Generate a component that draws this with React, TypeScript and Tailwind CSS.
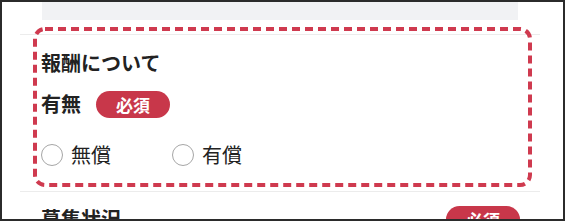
import React from 'react'

function RequiredBadge() {
  return (
    <span className="inline-flex items-center justify-center w-[74px] h-[27px] rounded-full bg-[#c8374a] text-white text-[17px] font-bold leading-none">
      必須
    </span>
  )
}

function Radio({ label, wide }: { label: string; wide?: boolean }) {
  return (
    <label className={`flex items-center gap-[8px] ${wide ? 'w-[131px]' : ''}`}>
      <span className="w-[22px] h-[22px] rounded-full border-[1.5px] border-[#a6a6a6] bg-white shrink-0" />
      <span className="text-[20px] leading-[30px]">{label}</span>
    </label>
  )
}

export default function App() {
  return (
    <div className="w-[565px] h-[221px] overflow-hidden border-2 border-[#2b2b2b] bg-white text-[#222] font-['Noto_Sans_CJK_JP','Noto_Sans',sans-serif]">
      <div className="ml-[18px] mr-[23px]">
        <div className="mx-[22px] h-[18px] bg-[#f1f2f4]" />
        <div className="mt-[14px] border-t border-[#ececec]" />

        {/* 報酬について */}
        <section className="relative pl-[21px] pr-[20px] pt-[13px] pb-[21px]">
          <h2 className="text-[20px] leading-[30px] font-bold">報酬について</h2>
          <div className="mt-[11px] flex items-center gap-[15px]">
            <span className="text-[20px] leading-[30px] font-bold">有無</span>
            <RequiredBadge />
          </div>
          <div className="mt-[21px] flex items-center">
            <Radio label="無償" wide />
            <Radio label="有償" />
          </div>

          {/* highlight */}
          <svg className="absolute left-[13px] top-[-8px] pointer-events-none" width="499" height="160" viewBox="0 0 499 160">
            <rect x="2" y="2" width="495" height="156" rx="10" fill="none" stroke="#cf3a4f" strokeWidth="4" strokeDasharray="8 5" />
          </svg>
        </section>

        <div className="border-t border-[#ececec]" />

        <section className="pl-[21px] pr-[20px] pt-[12px] flex items-center justify-between">
          <h2 className="text-[20px] leading-[30px] font-bold">募集状況</h2>
          <RequiredBadge />
        </section>
      </div>
    </div>
  )
}
